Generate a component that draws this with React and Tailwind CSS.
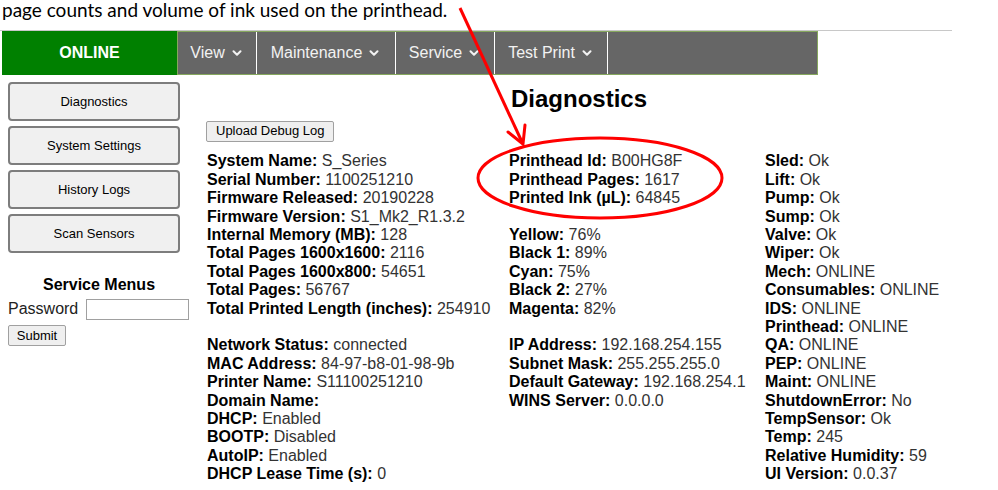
import React from 'react';
import { ChevronDown } from 'lucide-react';

const navItems = [
  { label: 'View', w: 'w-[79px]' },
  { label: 'Maintenance', w: 'w-[139px]' },
  { label: 'Service', w: 'w-[99px]' },
  { label: 'Test Print', w: 'w-[113px]' },
];

const sideButtons = ['Diagnostics', 'System Settings', 'History Logs', 'Scan Sensors'];

const col1 = [
  [
    ['System Name', 'S_Series'],
    ['Serial Number', '1100251210'],
    ['Firmware Released', '20190228'],
    ['Firmware Version', 'S1_Mk2_R1.3.2'],
    ['Internal Memory (MB)', '128'],
    ['Total Pages 1600x1600', '2116'],
    ['Total Pages 1600x800', '54651'],
    ['Total Pages', '56767'],
    ['Total Printed Length (inches)', '254910'],
  ],
  [
    ['Network Status', 'connected'],
    ['MAC Address', '84-97-b8-01-98-9b'],
    ['Printer Name', 'S11100251210'],
    ['Domain Name', ''],
    ['DHCP', 'Enabled'],
    ['BOOTP', 'Disabled'],
    ['AutoIP', 'Enabled'],
    ['DHCP Lease Time (s)', '0'],
  ],
];

const col2 = [
  [
    ['Printhead Id', 'B00HG8F'],
    ['Printhead Pages', '1617'],
    ['Printed Ink (µL)', '64845'],
  ],
  [
    ['Yellow', '76%'],
    ['Black 1', '89%'],
    ['Cyan', '75%'],
    ['Black 2', '27%'],
    ['Magenta', '82%'],
  ],
  [
    ['IP Address', '192.168.254.155'],
    ['Subnet Mask', '255.255.255.0'],
    ['Default Gateway', '192.168.254.1'],
    ['WINS Server', '0.0.0.0'],
  ],
];

const col3 = [
  [
    ['Sled', 'Ok'],
    ['Lift', 'Ok'],
    ['Pump', 'Ok'],
    ['Sump', 'Ok'],
    ['Valve', 'Ok'],
    ['Wiper', 'Ok'],
    ['Mech', 'ONLINE'],
    ['Consumables', 'ONLINE'],
    ['IDS', 'ONLINE'],
    ['Printhead', 'ONLINE'],
    ['QA', 'ONLINE'],
    ['PEP', 'ONLINE'],
    ['Maint', 'ONLINE'],
    ['ShutdownError', 'No'],
    ['TempSensor', 'Ok'],
    ['Temp', '245'],
    ['Relative Humidity', '59'],
    ['UI Version', '0.0.37'],
  ],
];

function Column({ groups, width }) {
  return (
    <div className={`${width} flex flex-col gap-[18.4px]`}>
      {groups.map((rows, g) => (
        <div key={g}>
          {rows.map(([k, v]) => (
            <div key={k} className="leading-[18.4px] whitespace-nowrap">
              <span className="font-bold text-black">{k}:</span>
              {v && <span className="text-[#333]"> {v}</span>}
            </div>
          ))}
        </div>
      ))}
    </div>
  );
}

export default function App() {
  return (
    <div className="relative w-[998px] h-[490px] overflow-hidden bg-white font-['Liberation_Sans',Arial,sans-serif]">
      {/* caption from the document the screenshot was pasted into */}
      <div className="w-[952px] h-[31px] border-b border-[#c8c8c8]">
        <p className="pl-[2px] pt-[1px] font-['Lato',sans-serif] text-[19px] leading-[18px] text-black">
          page counts and volume of ink used on the printhead.
        </p>
      </div>

      <nav className="ml-[2px] w-[816px] h-[44px] flex">
        <div className="w-[175px] bg-[#008000] flex items-center justify-center text-white font-bold text-[16px]">
          ONLINE
        </div>
        <div className="flex-1 flex bg-[#666] border border-[#86a75e]">
          {navItems.map(item => (
            <div
              key={item.label}
              className={`${item.w} border-r border-white flex items-center justify-center gap-[5px] text-[16px] text-[#f2f2f2]`}
            >
              {item.label}
              <ChevronDown size={14} strokeWidth={3.5} />
            </div>
          ))}
        </div>
      </nav>

      <div className="flex">
        <aside className="w-[200px] pl-[8px]">
          <div className="w-[172px] mt-[7px] flex flex-col gap-[5px]">
            {sideButtons.map(b => (
              <div
                key={b}
                className="h-[39px] rounded-[4px] border-2 border-[#7d7d7d] bg-[#f0f0f0] flex items-center justify-center text-[13px] text-black"
              >
                {b}
              </div>
            ))}
          </div>
          <div className="w-[182px] mt-[23px] text-center font-bold text-[16px] leading-[18.4px]">Service Menus</div>
          <div className="mt-[3px] flex items-center gap-[8px] text-[16px] text-[#222]">
            <span>Password</span>
            <div className="w-[103px] h-[21px] border border-[#a0a0a0] bg-white" />
          </div>
          <div className="mt-[4px] w-[58px] h-[21px] border border-[#a0a0a0] rounded-[2px] bg-[#efefef] flex items-center justify-center text-[13px] text-black">
            Submit
          </div>
        </aside>

        <main className="w-[758px]">
          <h2 className="mt-[10px] text-center font-bold text-[24px] leading-[27.6px] text-black">Diagnostics</h2>
          <div className="ml-[6px] mt-[8px] inline-flex h-[21px] items-center px-[9px] border border-[#a0a0a0] rounded-[2px] bg-[#efefef] text-[13px] text-black">
            Upload Debug Log
          </div>
          <div className="ml-[7px] mt-[10px] flex text-[16px]">
            <Column groups={col1} width="w-[302px]" />
            <Column groups={col2} width="w-[256px]" />
            <Column groups={col3} width="w-[190px]" />
          </div>
        </main>
      </div>

      {/* red annotation drawn over the screenshot */}
      <svg className="absolute inset-0 pointer-events-none" width="998" height="490">
        <ellipse cx="600" cy="178" rx="122" ry="40" fill="none" stroke="#ff0000" strokeWidth="3" />
        <line x1="460" y1="8" x2="522" y2="142" stroke="#ff0000" strokeWidth="3" />
        <polyline points="508,132 523,144 525,125" fill="none" stroke="#ff0000" strokeWidth="3" strokeLinecap="round" />
      </svg>
    </div>
  );
}
